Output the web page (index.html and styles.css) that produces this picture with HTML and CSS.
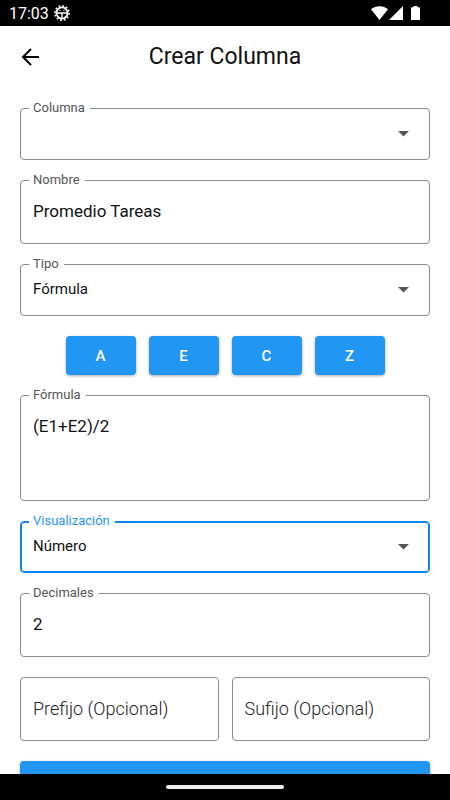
FILE: index.html
```html
<!DOCTYPE html>
<html lang="es">
<head>
<meta charset="utf-8">
<meta name="viewport" content="width=device-width, initial-scale=1">
<title>Crear Columna</title>
<link rel="stylesheet" href="styles.css">
</head>
<body>
<div class="status-bar">
  <div class="status-left">
    <span>17:03</span>
    <svg width="16" height="16" viewBox="0 0 16 16" aria-hidden="true">
      <circle cx="8" cy="8" r="5.6" fill="none" stroke="#fff" stroke-width="1.8"/>
      <circle cx="8" cy="8" r="7.1" fill="none" stroke="#fff" stroke-width="1.6" stroke-dasharray="1.8 1.918"/>
      <path d="M3 8h10M8 8v5" stroke="#fff" stroke-width="1.3"/>
      <circle cx="6" cy="5.4" r=".6" fill="#fff"/>
      <circle cx="10" cy="5.4" r=".6" fill="#fff"/>
    </svg>
  </div>
  <svg width="50" height="16" viewBox="0 0 50 16" fill="#fff" aria-hidden="true">
    <path d="M0 4.200C4.400 .2 12.600 .2 17 4.200L8.500 15z"/>
    <path d="M32 1v14H18z"/>
    <path d="M42.500 1h4v1.300h1.700q.8 0 .8.800V15h-9V3.100q0-.8.8-.8h1.700z"/>
  </svg>
</div>
<header class="app-bar">
  <button class="back" type="button" aria-label="Volver">
    <svg width="20" height="20" viewBox="0 0 20 20" fill="none" stroke="#000" stroke-width="2" aria-hidden="true">
      <path d="M19 10H3M11 2L3 10l8 8"/>
    </svg>
  </button>
  <h1>Crear Columna</h1>
</header>
<main>
  <form class="form">
    <div class="field">
      <label for="columna">Columna</label>
      <select id="columna"><option></option></select>
      <svg class="arrow" width="11" height="6" viewBox="0 0 11 6" aria-hidden="true"><path d="M0 0h11L5.500 5.500z"/></svg>
    </div>
    <div class="field">
      <label for="nombre">Nombre</label>
      <input id="nombre" type="text" value="Promedio Tareas">
    </div>
    <div class="field">
      <label for="tipo">Tipo</label>
      <select id="tipo"><option>Fórmula</option></select>
      <svg class="arrow" width="11" height="6" viewBox="0 0 11 6" aria-hidden="true"><path d="M0 0h11L5.500 5.500z"/></svg>
    </div>
    <div class="keys">
      <button type="button">A</button>
      <button type="button">E</button>
      <button type="button">C</button>
      <button type="button">Z</button>
    </div>
    <div class="field">
      <label for="formula">Fórmula</label>
      <textarea id="formula">(E1+E2)/2</textarea>
    </div>
    <div class="field active">
      <label for="visualizacion">Visualización</label>
      <select id="visualizacion"><option>Número</option></select>
      <svg class="arrow" width="11" height="6" viewBox="0 0 11 6" aria-hidden="true"><path d="M0 0h11L5.500 5.500z"/></svg>
    </div>
    <div class="field">
      <label for="decimales">Decimales</label>
      <input id="decimales" type="text" inputmode="numeric" value="2">
    </div>
    <div class="pair">
      <div class="field"><input type="text" aria-label="Prefijo" placeholder="Prefijo (Opcional)"></div>
      <div class="field"><input type="text" aria-label="Sufijo" placeholder="Sufijo (Opcional)"></div>
    </div>
    <button class="submit" type="submit" aria-label="Guardar"></button>
  </form>
</main>
<footer class="nav-bar"><div class="handle"></div></footer>
</body>
</html>
```
FILE: styles.css
```css
* {
  box-sizing: border-box;
}

body {
  margin: 0;
  height: 100vh;
  display: flex;
  flex-direction: column;
  background: #fff;
  color: #111;
  font-family: Roboto, "Liberation Sans", sans-serif;
}

button,
input,
select,
textarea {
  font-family: inherit;
  color: inherit;
}

.status-bar {
  flex: none;
  height: 26px;
  padding: 0 29px 0 9px;
  display: flex;
  align-items: center;
  justify-content: space-between;
  background: #000;
  color: #fff;
  font-size: 16px;
}

.status-left {
  display: flex;
  align-items: center;
  gap: 5px;
}

.app-bar {
  flex: none;
  height: 62px;
  padding: 0 20px;
  display: grid;
  grid-template-columns: 22px 1fr 22px;
  align-items: center;
}

.back {
  padding: 0;
  border: 0;
  background: none;
  display: flex;
}

h1 {
  margin: 0;
  font-size: 23px;
  font-weight: 400;
  line-height: 28px;
  text-align: center;
  color: #111;
}

main {
  flex: 1;
  min-height: 0;
  overflow-y: auto;
  scrollbar-width: none;
}

.form {
  padding: 20px;
  display: flex;
  flex-direction: column;
  gap: 20px;
}

.field {
  position: relative;
  min-width: 0;
  display: flex;
  border: 1px solid #8b8b8b;
  border-radius: 4px;
}

.field label {
  position: absolute;
  top: -9px;
  left: 8px;
  padding: 0 5px 0 4px;
  background: #fff;
  font-size: 13px;
  line-height: 16px;
  color: #555;
}

.field input,
.field select,
.field textarea {
  flex: 1;
  min-width: 0;
  margin: 0;
  border: 0;
  outline: 0;
  border-radius: 4px;
  background: none;
  appearance: none;
  resize: none;
  font-size: 17px;
}

.field input {
  height: 62px;
  padding: 0 12px 2px;
}

.field select {
  height: 50px;
  padding: 0 12px 2px;
  font-size: 15px;
}

.field textarea {
  height: 104px;
  padding: 20px 12px;
  line-height: 20px;
}

.field input:placeholder-shown {
  font-size: 18px;
  font-weight: 300;
}

.field input::placeholder {
  color: #222;
  opacity: 1;
}

.arrow {
  position: absolute;
  top: 22px;
  right: 20px;
  fill: #555;
  pointer-events: none;
}

.active {
  border-color: #0a84f5;
  box-shadow: inset 0 0 0 1px #0a84f5;
}

.active label {
  color: #2a93f5;
}

.keys {
  display: flex;
  justify-content: center;
  gap: 13px;
}

.keys button,
.submit {
  height: 39px;
  padding: 0;
  border: 0;
  border-radius: 4px;
  background: #2196f3;
  color: #fff;
  font-size: 15px;
  font-weight: 500;
  box-shadow: 0 1px 3px rgba(0, 0, 0, 0.35);
}

.keys button {
  width: 70px;
}

.pair {
  display: grid;
  grid-template-columns: 1fr 1fr;
  gap: 13px;
}

.nav-bar {
  flex: none;
  height: 26px;
  display: flex;
  align-items: center;
  justify-content: center;
  background: #000;
}

.handle {
  width: 118px;
  height: 4px;
  border-radius: 2px;
  background: #eee;
}
```
